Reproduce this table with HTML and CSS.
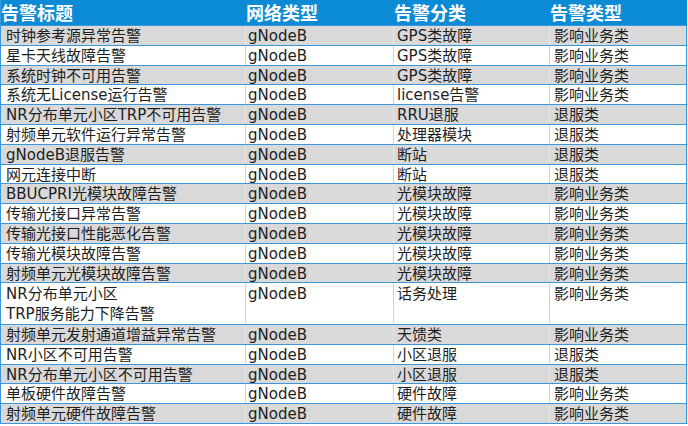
FILE: index.html
```html
<!DOCTYPE html>
<html>
<head>
<meta charset="utf-8">
<link rel="stylesheet" href="styles.css">
</head>
<body>
<table class="alarm">
<colgroup><col class="c1"><col class="c2"><col class="c3"><col class="c4"></colgroup>
<thead>
<tr><th class="p1">告警标题</th><th class="p2">网络类型</th><th class="p3">告警分类</th><th class="p4">告警类型</th></tr>
</thead>
<tbody>
<tr class="g"><td class="p1">时钟参考源异常告警</td><td class="p2">gNodeB</td><td class="p3">GPS类故障</td><td class="p4">影响业务类</td></tr>
<tr><td class="p1">星卡天线故障告警</td><td class="p2">gNodeB</td><td class="p3">GPS类故障</td><td class="p4">影响业务类</td></tr>
<tr class="g"><td class="p1">系统时钟不可用告警</td><td class="p2">gNodeB</td><td class="p3">GPS类故障</td><td class="p4">影响业务类</td></tr>
<tr><td class="p1">系统无License运行告警</td><td class="p2">gNodeB</td><td class="p3">license告警</td><td class="p4">影响业务类</td></tr>
<tr class="g"><td class="p1">NR分布单元小区TRP不可用告警</td><td class="p2">gNodeB</td><td class="p3">RRU退服</td><td class="p4">退服类</td></tr>
<tr><td class="p1">射频单元软件运行异常告警</td><td class="p2">gNodeB</td><td class="p3">处理器模块</td><td class="p4">退服类</td></tr>
<tr class="g"><td class="p1">gNodeB退服告警</td><td class="p2">gNodeB</td><td class="p3">断站</td><td class="p4">退服类</td></tr>
<tr><td class="p1">网元连接中断</td><td class="p2">gNodeB</td><td class="p3">断站</td><td class="p4">退服类</td></tr>
<tr class="g"><td class="p1">BBUCPRI光模块故障告警</td><td class="p2">gNodeB</td><td class="p3">光模块故障</td><td class="p4">影响业务类</td></tr>
<tr><td class="p1">传输光接口异常告警</td><td class="p2">gNodeB</td><td class="p3">光模块故障</td><td class="p4">影响业务类</td></tr>
<tr class="g"><td class="p1">传输光接口性能恶化告警</td><td class="p2">gNodeB</td><td class="p3">光模块故障</td><td class="p4">影响业务类</td></tr>
<tr><td class="p1">传输光模块故障告警</td><td class="p2">gNodeB</td><td class="p3">光模块故障</td><td class="p4">影响业务类</td></tr>
<tr class="g"><td class="p1">射频单元光模块故障告警</td><td class="p2">gNodeB</td><td class="p3">光模块故障</td><td class="p4">影响业务类</td></tr>
<tr class="dbl"><td class="p1">NR分布单元小区<br>TRP服务能力下降告警</td><td class="p2">gNodeB</td><td class="p3">话务处理</td><td class="p4">影响业务类</td></tr>
<tr class="g"><td class="p1">射频单元发射通道增益异常告警</td><td class="p2">gNodeB</td><td class="p3">天馈类</td><td class="p4">影响业务类</td></tr>
<tr><td class="p1">NR小区不可用告警</td><td class="p2">gNodeB</td><td class="p3">小区退服</td><td class="p4">退服类</td></tr>
<tr class="g"><td class="p1">NR分布单元小区不可用告警</td><td class="p2">gNodeB</td><td class="p3">小区退服</td><td class="p4">退服类</td></tr>
<tr><td class="p1">单板硬件故障告警</td><td class="p2">gNodeB</td><td class="p3">硬件故障</td><td class="p4">影响业务类</td></tr>
<tr class="g"><td class="p1">射频单元硬件故障告警</td><td class="p2">gNodeB</td><td class="p3">硬件故障</td><td class="p4">影响业务类</td></tr>
</tbody>
</table>
</body>
</html>
```
FILE: styles.css
```css
html, body {
  margin: 0;
  padding: 0;
  background: #ffffff;
}
body {
  font-family: "DejaVu Sans", "Noto Sans CJK SC", sans-serif;
  color: #1e1e1e;
}
.alarm {
  border-collapse: collapse;
  table-layout: fixed;
  width: 686px;
  margin: 0;
  border-left: 1px solid #3b96dc;
  border-right: 1px solid #3b96dc;
}
.c1 { width: 245px; }
.c2 { width: 148px; }
.c3 { width: 156px; }
.c4 { width: 137px; }
.alarm th {
  background: #0b8ad6;
  color: #ffffff;
  font-family: "Noto Sans CJK SC", sans-serif;
  font-weight: 700;
  font-size: 18px;
  height: 25px;
  line-height: 25px;
  padding: 0;
  text-align: left;
  border-bottom: 1px solid #3b96dc;
  border-right: 1px solid #0b8ad6;
  white-space: nowrap;
  overflow: hidden;
}
.alarm td {
  font-size: 15px;
  height: 16.8px;
  line-height: 16.8px;
  padding-top: 2px;
  padding-bottom: 0;
  border-bottom: 1px solid #3b96dc;
  border-right: 1px solid #d3d3d3;
  vertical-align: top;
  white-space: nowrap;
  overflow: hidden;
}
.alarm td.p4 { border-right: none; }
.alarm tr.g td {
  background: #d9d9d9;
  border-right-color: #e6e6e6;
}
.alarm tr.dbl td {
  height: 36.6px;
  line-height: 19.3px;
}
.p1 { padding-left: 5px; padding-right: 0; }
.p2 { padding-left: 2px; padding-right: 0; }
.p3 { padding-left: 3px; padding-right: 0; }
.p4 { padding-left: 4px; padding-right: 0; }
```
